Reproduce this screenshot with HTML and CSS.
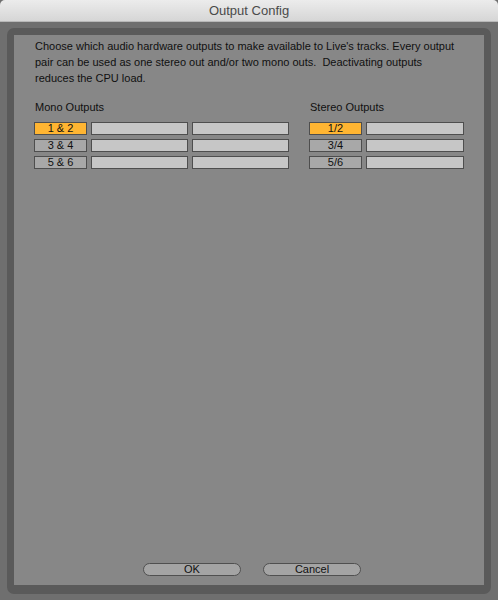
FILE: index.html
```html
<!DOCTYPE html>
<html>
<head>
<meta charset="utf-8">
<link rel="stylesheet" href="styles.css">
</head>
<body>
<div class="window">
  <div class="titlebar">Output Config</div>
  <div class="frame">
    <div class="panel">
      <p class="intro">Choose which audio hardware outputs to make available to Live's tracks. Every output<br>pair can be used as one stereo out and/or two mono outs.&nbsp; Deactivating outputs<br>reduces the CPU load.</p>
      <div class="groups">
        <div class="group mono">
          <div class="group-title">Mono Outputs</div>
          <div class="rows">
            <div class="row"><div class="btn num on">1 &amp; 2</div><div class="btn ch"></div><div class="btn ch"></div></div>
            <div class="row"><div class="btn num">3 &amp; 4</div><div class="btn ch"></div><div class="btn ch"></div></div>
            <div class="row"><div class="btn num">5 &amp; 6</div><div class="btn ch"></div><div class="btn ch"></div></div>
          </div>
        </div>
        <div class="group stereo">
          <div class="group-title">Stereo Outputs</div>
          <div class="rows">
            <div class="row"><div class="btn num on">1/2</div><div class="btn ch"></div></div>
            <div class="row"><div class="btn num">3/4</div><div class="btn ch"></div></div>
            <div class="row"><div class="btn num">5/6</div><div class="btn ch"></div></div>
          </div>
        </div>
      </div>
      <div class="actions">
        <div class="pill">OK</div>
        <div class="pill">Cancel</div>
      </div>
    </div>
  </div>
</div>
</body>
</html>
```

FILE: styles.css
```css
html, body {
  margin: 0;
  padding: 0;
  background: #6f6f6f;
}
.window {
  width: 498px;
  height: 600px;
  display: flex;
  flex-direction: column;
  background: #6f6f6f;
  font-family: "Liberation Sans", Arial, sans-serif;
}
.titlebar {
  height: 22px;
  flex: none;
  border-radius: 5px 5px 0 0;
  background: linear-gradient(#ececec, #d6d6d6);
  border-bottom: 1px solid #b8b8b8;
  box-sizing: border-box;
  text-align: center;
  line-height: 22px;
  font-size: 13px;
  color: #4a4a4a;
}
.frame {
  flex: 1;
  margin: 6px 7px 6px 7px;
  padding: 7px 7px 9px 7px;
  background: #5a5a5a;
  border-radius: 7px;
  display: flex;
}
.panel {
  flex: 1;
  background: #878787;
  padding: 3px 20px 9px 20px;
  display: flex;
  flex-direction: column;
  color: #101010;
  font-size: 11px;
}
.intro {
  margin: 0 0 0 1px;
  line-height: 16px;
}
.groups {
  margin-top: 13px;
  display: flex;
  gap: 20px;
}
.group-title {
  line-height: 16px;
  margin-left: 1px;
  margin-bottom: 7px;
}
.rows {
  display: flex;
  flex-direction: column;
  gap: 4px;
}
.row {
  display: flex;
  gap: 4px;
}
.btn {
  height: 13px;
  box-sizing: border-box;
  border: 1px solid #4e4e4e;
  font-size: 11px;
  line-height: 11px;
  text-align: center;
  color: #101010;
}
.num {
  width: 53px;
  background: #a8a8a8;
}
.num.on {
  background: #ffb532;
}
.ch {
  width: 97px;
  background: #c6c6c6;
}
.stereo .ch {
  width: 98px;
}
.actions {
  margin-top: auto;
  display: flex;
  justify-content: center;
  gap: 22px;
  padding-left: 6px;
}
.pill {
  width: 98px;
  height: 13px;
  box-sizing: border-box;
  border: 1px solid #505050;
  border-radius: 7px;
  background: #a4a4a4;
  text-align: center;
  font-size: 11px;
  line-height: 11px;
  color: #101010;
}
```
